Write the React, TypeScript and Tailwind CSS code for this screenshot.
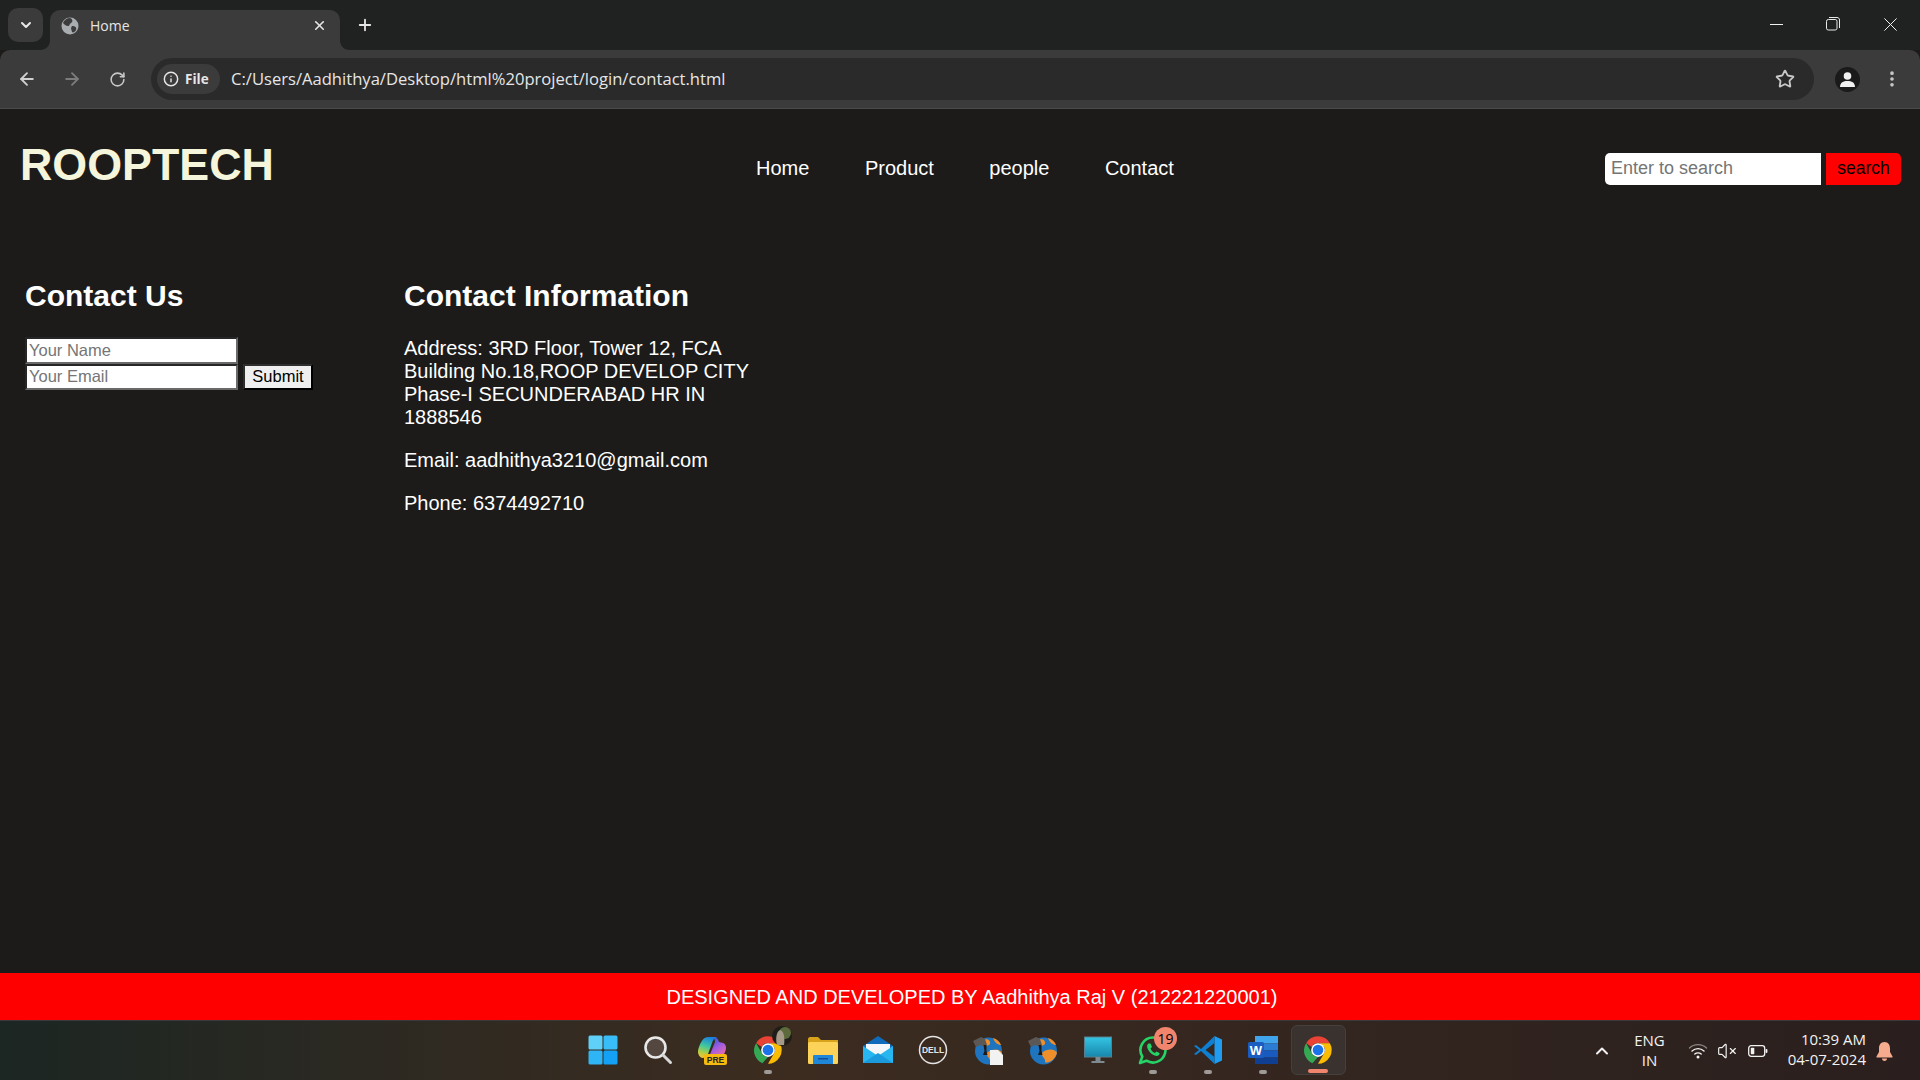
import React from 'react';
import {
  ArrowLeft,
  ArrowRight,
  RotateCw,
  Star,
  Info,
  X,
  Plus,
  ChevronDown,
  ChevronUp,
  EllipsisVertical,
  VolumeX,
} from 'lucide-react';

const ui = "font-['Open_Sans',sans-serif]";
const web = "font-['Liberation_Sans',Arial,sans-serif]";

const Globe = () => (
  <svg width="18" height="18" viewBox="0 0 18 18">
    <circle cx="9" cy="9" r="8.5" fill="#a9adb0" />
    <path d="M9 1 C12 2 12 5 10 6 C8 7 9 9 7 9 C5 9 3 7 2 6 C3 3 6 1 9 1Z" fill="#3c3c3c" />
    <path d="M11 9 C14 9 16 10 15 13 C14 15 12 16 11 15 C11 13 9 12 11 9Z" fill="#3c3c3c" />
  </svg>
);

const ChromeLogo = ({ size = 30 }: { size?: number }) => (
  <svg width={size} height={size} viewBox="0 0 48 48">
    <path d="M24 2 A22 22 0 0 1 43 13 H24 A11 11 0 0 0 14 19 L5 13 A22 22 0 0 1 24 2Z" fill="#ea4335" />
    <path d="M5 13 L14.5 29.5 A11 11 0 0 0 24 35 L15 45 A22 22 0 0 1 5 13Z" fill="#34a853" />
    <path d="M43 13 A22 22 0 0 1 24 46 L33.5 29.5 A11 11 0 0 0 33.5 18.5 L27 13Z" fill="#fbbc04" />
    <circle cx="24" cy="24" r="11" fill="#fff" />
    <circle cx="24" cy="24" r="8.5" fill="#1a73e8" />
  </svg>
);

const WinLogo = () => (
  <svg width="30" height="30" viewBox="0 0 30 30">
    <rect x="0.5" y="0.5" width="14" height="14" rx="1.5" fill="#5fd0f8" />
    <rect x="15.5" y="0.5" width="14" height="14" rx="1.5" fill="#38bdf8" />
    <rect x="0.5" y="15.5" width="14" height="14" rx="1.5" fill="#2fb4f5" />
    <rect x="15.5" y="15.5" width="14" height="14" rx="1.5" fill="#14a0f4" />
  </svg>
);

const SearchIcon = () => (
  <svg width="30" height="30" viewBox="0 0 30 30">
    <circle cx="12.5" cy="12.5" r="10" fill="#54473f" stroke="#e8e8e8" strokeWidth="2.6" />
    <path d="M20 20 L27.5 27.5" stroke="#d8d8d8" strokeWidth="3" strokeLinecap="round" />
  </svg>
);

const CopilotIcon = () => (
  <svg width="32" height="32" viewBox="0 0 32 32">
    <defs>
      <linearGradient id="cpa" x1="0.6" y1="0" x2="0.3" y2="1">
        <stop offset="0" stopColor="#1b7fe0" />
        <stop offset="0.45" stopColor="#3fc7a0" />
        <stop offset="0.8" stopColor="#b8d040" />
        <stop offset="1" stopColor="#f0c33a" />
      </linearGradient>
      <linearGradient id="cpb" x1="0.2" y1="0" x2="0.8" y2="1">
        <stop offset="0" stopColor="#1c5fd8" />
        <stop offset="0.5" stopColor="#a25be0" />
        <stop offset="1" stopColor="#ee6fa6" />
      </linearGradient>
    </defs>
    <path d="M16 3 C20 3 21 5 22 8 L26 9 C29 10 30 14 28 18 C27 21 25 23 22 23 H12 L18 8 C18 6 17 4 16 3Z" fill="url(#cpb)" />
    <path d="M11 3 H20 C17 4 16 6 15 9 L11 20 C10 23 8 24 5 24 C1 22 0 18 2 13 C4 7 7 3 11 3Z" fill="url(#cpa)" />
    <rect x="7" y="20" width="23" height="11" rx="2" fill="#f5b90f" />
    <text x="18.5" y="28.5" textAnchor="middle" fontSize="8.5" fontWeight="700" fill="#222" fontFamily="Liberation Sans">PRE</text>
  </svg>
);

const ChromeAvatar = () => (
  <div className="relative">
    <ChromeLogo />
    <svg className="absolute -top-[9px] -right-[9px]" width="20" height="20" viewBox="0 0 20 20">
      <circle cx="10" cy="10" r="10" fill="#1f1d18" />
      <circle cx="13" cy="7" r="6" fill="#5d6b3c" />
      <path d="M5 19 C3 12 5 5 8 4 C12 5 13 12 12 19Z" fill="#a69a88" />
    </svg>
  </div>
);

const FolderIcon = () => (
  <svg width="30" height="30" viewBox="0 0 30 30">
    <path d="M0 4 C0 3 1 2 2 2 H10 L13 5 H30 V27 C30 28 29 29 28 29 H2 C1 29 0 28 0 27Z" fill="#d9a21b" />
    <rect x="0" y="7" width="30" height="22" rx="1.5" fill="#fcd358" />
    <path d="M5 21 C5 20 6 20 6 20 H24 C25 20 25 20 25 21 V29 H5Z" fill="#1f86d8" />
    <rect x="10" y="23" width="10" height="1.5" fill="#0f4f96" />
  </svg>
);

const MailIcon = () => (
  <svg width="30" height="30" viewBox="0 0 30 30">
    <path d="M0 11 L15 1 L30 11 V28 H0Z" fill="#0f6cbd" />
    <path d="M3 9 H27 V15 L15 22 L3 15Z" fill="#f4f7f9" />
    <path d="M0 11 L15 21 L30 11 V28 H0Z" fill="#27b6ef" />
    <path d="M0 28 L15 18 L30 28Z" fill="#1c9ade" />
  </svg>
);

const DellIcon = () => (
  <svg width="30" height="30" viewBox="0 0 30 30">
    <circle cx="15" cy="15" r="13.5" fill="none" stroke="#e4e4e4" strokeWidth="1.5" />
    <text x="15" y="18" textAnchor="middle" fontSize="8.5" fontWeight="700" fill="#e4e4e4" fontFamily="Liberation Sans">DELL</text>
  </svg>
);

const WebGlobe = ({ doc = false }: { doc?: boolean }) => (
  <svg width="32" height="32" viewBox="0 0 32 32">
    <circle cx="16.5" cy="17" r="13.5" fill="#1f74bf" />
    <path d="M10 6 C15 4 19 6 18 10 C15 13 12 11 10 12Z" fill="#ef8f2c" />
    <path d="M15 19 C20 14 29 15 30 19 C28 26 21 30 18 28 C19 24 14 23 15 19Z" fill="#ef8f2c" />
    <path d="M21 4 C25 5 28 8 29 11 C26 11 23 9 21 4Z" fill="#ef8f2c" />
    <path d="M1 7 L9 3 L13 5 L15 11 L11 12 L8 11 L4 13Z" fill="#5b5855" />
    <path d="M11.5 11 L14.5 11 L14.5 17 L15.5 21 L11 21 L12.5 17Z" fill="#1d1a18" />
    {doc && <path d="M18 16 H26 L31 21 V31 H18Z" fill="#f2f2f2" />}
  </svg>
);

const MonitorIcon = () => (
  <svg width="30" height="30" viewBox="0 0 30 30">
    <defs>
      <linearGradient id="mon" x1="0" y1="0" x2="0" y2="1">
        <stop offset="0" stopColor="#35c5e4" />
        <stop offset="1" stopColor="#1786ab" />
      </linearGradient>
    </defs>
    <rect x="1.5" y="2" width="27" height="20" fill="url(#mon)" stroke="#5a7f8c" />
    <rect x="12.5" y="22" width="5" height="4" fill="#7d8a90" />
    <rect x="8.5" y="26" width="13" height="2" fill="#7d8a90" />
  </svg>
);

const WhatsAppIcon = () => (
  <div className="relative">
    <svg width="30" height="30" viewBox="0 0 30 30">
      <path d="M15 2.5 A12.5 12.5 0 1 1 8.5 25.7 L2 28 L4.3 21.5 A12.5 12.5 0 0 1 15 2.5Z" fill="none" stroke="#25d366" strokeWidth="2.6" strokeLinejoin="round" />
      <path d="M10.5 8.5 C9 9.5 8.5 11.5 10 14.5 C12 18 15 20.5 18.5 21 C20.5 21 22 19.5 21.5 18 L18.5 16.5 L17 18 C15 17.5 13 15 12.5 13.5 L14 12 L12.5 8.5Z" fill="#25d366" />
    </svg>
    <div className="absolute -top-[8px] -right-[9px] w-[23px] h-[23px] rounded-full bg-[#f1846d] text-black text-[14px] flex items-center justify-center">19</div>
  </div>
);

const VsCodeIcon = () => (
  <svg width="30" height="30" viewBox="0 0 30 30">
    <path d="M21.5 1 L29 4.5 V25.5 L21.5 29 L21.5 1Z" fill="#1f9cf0" />
    <path d="M21.5 1 L8 14 L3 10 L1 11 L6 15 L1 19 L3 20 L8 16 L21.5 29 V22 L12.5 15 L21.5 8Z" fill="#0e7fd1" />
  </svg>
);

const WordIcon = () => (
  <svg width="30" height="30" viewBox="0 0 30 30">
    <rect x="7" y="1" width="23" height="7.5" fill="#41a5ee" />
    <rect x="7" y="8.5" width="23" height="7" fill="#2b7cd3" />
    <rect x="7" y="15.5" width="23" height="7" fill="#185abd" />
    <rect x="7" y="22.5" width="23" height="6.5" fill="#103f91" />
    <rect x="0" y="7" width="16" height="16" rx="1.5" fill="#1a5cc0" />
    <text x="8" y="19.5" textAnchor="middle" fontSize="13" fontWeight="700" fill="#fff" fontFamily="Liberation Sans">W</text>
  </svg>
);

const WifiIcon = () => (
  <svg width="20" height="18" viewBox="0 0 20 18" fill="none" strokeLinecap="round">
    <path d="M1.5 6 C6 1.5 14 1.5 18.5 6" stroke="#8a8582" strokeWidth="1.4" />
    <path d="M4 9 C7.5 5.8 12.5 5.8 16 9" stroke="#f2f2f2" strokeWidth="1.4" />
    <path d="M6.8 12 C8.5 10.5 11.5 10.5 13.2 12" stroke="#f2f2f2" strokeWidth="1.4" />
    <circle cx="10" cy="15" r="1.5" fill="#f2f2f2" />
  </svg>
);

const BatteryIcon = () => (
  <svg width="20" height="14" viewBox="0 0 20 14" fill="none">
    <rect x="0.7" y="1.7" width="16" height="10.6" rx="2.5" stroke="#f2f2f2" strokeWidth="1.3" />
    <rect x="2.8" y="3.8" width="3.5" height="6.4" rx="0.8" fill="#f2f2f2" />
    <rect x="17.6" y="5" width="1.8" height="4" rx="0.8" fill="#f2f2f2" />
  </svg>
);

const BellIcon = () => (
  <svg width="17" height="21" viewBox="0 0 17 21" fill="#f7ab8e">
    <path d="M8.5 1 C12.5 1 14 4 14 7.5 V11 L16.5 15.5 C16.7 16 16.4 16.5 16 16.5 H1 C0.6 16.5 0.3 16 0.5 15.5 L3 11 V7.5 C3 4 4.5 1 8.5 1Z" />
    <path d="M6 17.5 H11 C11 19 10 20 8.5 20 C7 20 6 19 6 17.5Z" />
  </svg>
);

const RestoreIcon = () => (
  <svg width="14" height="14" viewBox="0 0 14 14" fill="none" stroke="#e8e8e8" strokeWidth="1">
    <rect x="0.5" y="2.5" width="10.5" height="10.5" rx="1.8" />
    <path d="M3 0.5 H11 C12.5 0.5 13.5 1.5 13.5 3 V11" />
  </svg>
);

const MinimizeIcon = () => (
  <svg width="13" height="1" viewBox="0 0 13 1">
    <rect width="13" height="1" fill="#f0f0f0" />
  </svg>
);

const CloseIcon = () => (
  <svg width="13" height="13" viewBox="0 0 13 13" stroke="#f0f0f0" strokeWidth="1">
    <path d="M0.4 0.4 L12.6 12.6 M12.6 0.4 L0.4 12.6" />
  </svg>
);

const Tile = ({ children, dot, active }: { children: React.ReactNode; dot?: boolean; active?: boolean }) => (
  <div className={`relative w-[55px] h-[50px] mb-[2px] flex items-center justify-center rounded-md ${active ? 'bg-[#3a322e] border border-[#46403c]' : ''}`}>
    {children}
    {dot && <span className="absolute bottom-[1px] w-[8px] h-[4px] rounded-full bg-[#9e9a97]" />}
    {active && <span className="absolute bottom-[1px] w-[20px] h-[4px] rounded-full bg-[#f1846d]" />}
  </div>
);

const BrowserChrome = () => (
  <div className={`${ui} shrink-0`}>
    <div className="h-[50px] bg-[#202222] flex items-end pl-[8px] relative">
      <div className="w-[35px] h-[34px] mb-[8px] rounded-[10px] bg-[#3b3b3b] flex items-center justify-center">
        <ChevronDown size={16} strokeWidth={3} className="text-[#e8e8e8]" />
      </div>
      <div className="relative ml-[7px] w-[290px] h-[40px] bg-[#3b3b3b] rounded-t-[10px] flex items-center pl-[11px] pr-[13px] pb-[9px]">
        <Globe />
        <span className="ml-[11px] text-[14px] text-[#e6e6e6]">Home</span>
        <X size={15} strokeWidth={2.6} className="ml-auto text-[#e6e6e6]" />
        <svg className="absolute -left-[10px] bottom-0" width="10" height="10" viewBox="0 0 10 10">
          <path d="M10 0 V10 H0 C6 10 10 6 10 0Z" fill="#3b3b3b" />
        </svg>
        <svg className="absolute -right-[10px] bottom-0" width="10" height="10" viewBox="0 0 10 10">
          <path d="M0 0 V10 H10 C4 10 0 6 0 0Z" fill="#3b3b3b" />
        </svg>
      </div>
      <Plus size={18} strokeWidth={2.4} className="ml-[16px] mb-[16px] text-[#e6e6e6]" />
      <div className="ml-auto flex items-center h-[50px] pr-[23px] pb-[2px]">
        <div className="mr-[43px] flex"><MinimizeIcon /></div>
        <RestoreIcon />
        <div className="ml-[44px] flex"><CloseIcon /></div>
      </div>
    </div>
    <div className="h-[59px] bg-[#3b3b3b] rounded-t-[10px] border-b border-[#4a4a4a] flex items-center pl-[17px]">
      <ArrowLeft size={20} strokeWidth={2.2} className="text-[#d0d0d0]" />
      <ArrowRight size={20} strokeWidth={2.2} className="ml-[25px] text-[#7c7c7c]" />
      <RotateCw size={17} strokeWidth={2.2} className="ml-[27px] text-[#c8c8c8]" />
      <div className="ml-[25px] h-[42px] w-[1663px] rounded-full bg-[#2a2a2a] flex items-center pl-[6px] pr-[19px]">
        <div className="h-[30px] w-[63px] rounded-full bg-[#3b3b3b] flex items-center pl-[6px] gap-[6px]">
          <Info size={16} strokeWidth={2.2} className="text-[#e6e6e6]" />
          <span className="text-[13.5px] font-bold text-[#e6e6e6]">File</span>
        </div>
        <span className="ml-[11px] pt-[1px] text-[16.6px] text-[#e6e6e6] whitespace-nowrap">C:/Users/Aadhithya/Desktop/html%20project/login/contact.html</span>
        <Star size={20} strokeWidth={2.2} className="ml-auto text-[#c8c8c8]" />
      </div>
      <div className="ml-[21px] w-[25px] h-[25px] rounded-full bg-[#1a1a1a] flex items-center justify-center overflow-hidden">
        <svg width="17" height="17" viewBox="0 0 17 17" fill="#f0f0f0">
          <circle cx="8.5" cy="5" r="3.8" />
          <path d="M1 16 C1 11.5 4.5 10 8.5 10 C12.5 10 16 11.5 16 16Z" />
        </svg>
      </div>
      <EllipsisVertical size={20} strokeWidth={2.4} className="ml-[22px] text-[#c8c8c8]" />
    </div>
  </div>
);

const Taskbar = () => (
  <div className={`${ui} h-[60px] shrink-0 border-t border-[#3a3a3a] bg-gradient-to-r from-[#1c2623] via-[#3c2c20] via-[40%] to-[#2a1f1e] grid grid-cols-[1fr_auto_1fr] items-center`}>
    <div />
    <div className="flex items-center h-[60px] ml-[1px]">
      <Tile><WinLogo /></Tile>
      <Tile><SearchIcon /></Tile>
      <Tile><CopilotIcon /></Tile>
      <Tile dot><ChromeAvatar /></Tile>
      <Tile><FolderIcon /></Tile>
      <Tile><MailIcon /></Tile>
      <Tile><DellIcon /></Tile>
      <Tile><WebGlobe doc /></Tile>
      <Tile><WebGlobe /></Tile>
      <Tile><MonitorIcon /></Tile>
      <Tile dot><WhatsAppIcon /></Tile>
      <Tile dot><VsCodeIcon /></Tile>
      <Tile dot><WordIcon /></Tile>
      <Tile active><ChromeLogo /></Tile>
    </div>
    <div className="flex items-center justify-end pr-[27px] text-[#f2f2f2]">
      <ChevronUp size={20} strokeWidth={2.4} className="mr-[22px]" />
      <div className="text-[15px] leading-[20px] text-center mr-[23px] pb-[2px]">
        <div>ENG</div>
        <div>IN</div>
      </div>
      <WifiIcon />
      <VolumeX size={20} strokeWidth={1.4} className="ml-[9px]" />
      <div className="ml-[11px]"><BatteryIcon /></div>
      <div className="ml-[20px] text-[15px] leading-[20px] text-right pb-[4px]">
        <div>10:39 AM</div>
        <div>04-07-2024</div>
      </div>
      <div className="ml-[10px] flex"><BellIcon /></div>
    </div>
  </div>
);

export default function App() {
  return (
    <div className="h-screen flex flex-col overflow-hidden bg-[#1c1b1a]">
      <BrowserChrome />

      <div className={`${web} flex-1 min-h-0 flex flex-col text-white`}>
        <header className="h-[118px] shrink-0 flex items-center justify-between pl-5 pr-[19px]">
          <h1 className="text-[44.8px] font-bold text-[#f5f5dc] pb-[6px]">ROOPTECH</h1>
          <nav className="ml-[51px] flex gap-[55.5px] text-[20px]">
            <a>Home</a>
            <a>Product</a>
            <a>people</a>
            <a>Contact</a>
          </nav>
          <div className="flex gap-[5px] mt-[1px]">
            <input
              placeholder="Enter to search"
              className="w-[216px] h-[32px] rounded-l-[5px] bg-white px-[6px] text-[18px] text-black placeholder:text-[#757575] outline-none"
            />
            <button className="w-[75px] h-[32px] rounded-r-[5px] bg-[#ff0000] text-[17.5px] text-black">search</button>
          </div>
        </header>

        <main className="flex-1 flex pl-[25px] pt-[52px]">
          <section className="w-[379px] shrink-0">
            <h2 className="text-[30px] leading-[34px] font-bold mb-[24px]">Contact Us</h2>
            <div className="flex flex-col">
              <input
                placeholder="Your Name"
                className="w-[212.5px] h-[27px] bg-white border-2 border-t-[#262626] border-l-[#262626] border-r-[#6a6a6a] border-b-[#6a6a6a] px-[2px] text-[16.5px] text-black placeholder:text-[#757575] outline-none"
              />
              <div className="flex gap-[5.5px]">
                <input
                  placeholder="Your Email"
                  className="w-[212.5px] h-[26px] bg-white border-2 border-t-[#262626] border-l-[#262626] border-r-[#6a6a6a] border-b-[#6a6a6a] px-[2px] pb-[1px] text-[16.5px] text-black placeholder:text-[#757575] outline-none"
                />
                <button className="w-[70px] h-[26px] bg-[#efefef] border-2 border-t-[#2e2e2e] border-l-[#2e2e2e] border-r-black border-b-black pb-[2px] text-[16.5px] leading-none text-black">Submit</button>
              </div>
            </div>
          </section>
          <section className="w-[350px] shrink-0">
            <h2 className="text-[30px] leading-[34px] font-bold mb-[24px]">Contact Information</h2>
            <p className="text-[20px] leading-[23px] mb-[20px]">Address: 3RD Floor, Tower 12, FCA Building No.18,ROOP DEVELOP CITY Phase-I SECUNDERABAD HR IN 1888546</p>
            <p className="text-[20px] leading-[23px] mb-[20px]">Email: aadhithya3210@gmail.com</p>
            <p className="text-[20px] leading-[23px]">Phone: 6374492710</p>
          </section>
        </main>

        <footer className="h-[47px] shrink-0 bg-[#ff0000] flex items-center justify-center text-[20px] text-white">
          <span className="mr-[-24px]">DESIGNED AND DEVELOPED BY Aadhithya Raj V (212221220001)</span>
        </footer>
      </div>

      <Taskbar />
    </div>
  );
}
